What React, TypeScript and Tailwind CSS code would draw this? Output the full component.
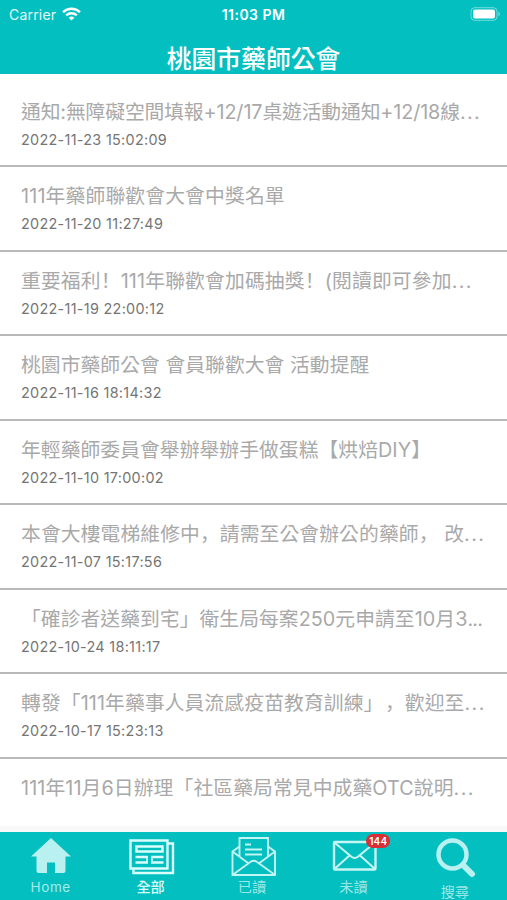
import React from 'react';
import clsx from 'clsx';

interface Notice {
  title: string;
  date?: string;
  tracking: string;
  dots?: 'wide' | 'narrow';
}

const notices: Notice[] = [
  { title: '通知:無障礙空間填報+12/17桌遊活動通知+12/18線', date: '2022-11-23 15:02:09', tracking: 'tracking-[-0.12px]', dots: 'wide' },
  { title: '111年藥師聯歡會大會中獎名單', date: '2022-11-20 11:27:49', tracking: 'tracking-[0.15px]' },
  { title: '重要福利！111年聯歡會加碼抽獎！(閱讀即可參加', date: '2022-11-19 22:00:12', tracking: 'tracking-[0.15px]', dots: 'wide' },
  { title: '桃園市藥師公會 會員聯歡大會 活動提醒', date: '2022-11-16 18:14:32', tracking: 'tracking-[0.05px]' },
  { title: '年輕藥師委員會舉辦舉辦手做蛋糕【烘焙DIY】', date: '2022-11-10 17:00:02', tracking: 'tracking-[0.05px]' },
  { title: '本會大樓電梯維修中，請需至公會辦公的藥師， 改', date: '2022-11-07 15:17:56', tracking: 'tracking-[0.1px]', dots: 'wide' },
  { title: '「確診者送藥到宅」衛生局每案250元申請至10月3', date: '2022-10-24 18:11:17', tracking: 'tracking-[0.05px]', dots: 'narrow' },
  { title: '轉發「111年藥事人員流感疫苗教育訓練」，歡迎至', date: '2022-10-17 15:23:13', tracking: 'tracking-[0.1px]', dots: 'wide' },
  { title: '111年11月6日辦理「社區藥局常見中成藥OTC說明', tracking: 'tracking-[0.1px]', dots: 'wide' },
];

// Full-width commas and exclamation marks sit on the baseline at the left of
// their cell; a comma after a closing bracket gets a little more room.
const renderTitle = (title: string) =>
  title.split(/(，|！)/).map((part, i, parts) =>
    part === '，' || part === '！' ? (
      <span
        key={i}
        lang="zh-CN"
        className={clsx(
          "font-['Noto_Sans_CJK_SC',sans-serif] leading-none",
          parts[i - 1].endsWith('」') && 'pl-[1.5px]'
        )}
      >
        {part}
      </span>
    ) : (
      <React.Fragment key={i}>{part}</React.Fragment>
    )
  );

const StatusBar: React.FC = () => (
  <div className="relative flex h-7 items-center justify-between pl-[9px] pr-1.5 text-white">
    <div className="flex items-center gap-1.5">
      <span className="text-[14px] tracking-[0.2px] opacity-90">Carrier</span>
      <svg width="19" height="14" viewBox="0 0 19 14" fill="none" stroke="white" strokeWidth="2.4">
        <path d="M1 5.2C5.8 .6 13.2 .6 18 5.2" />
        <path d="M4.2 8.3c3-2.8 7.6-2.8 10.6 0" />
        <path d="M9.5 13.6 6.6 10.7c1.6-1.5 4.2-1.5 5.8 0Z" fill="white" stroke="none" />
      </svg>
    </div>
    <span className="absolute left-1/2 -translate-x-1/2 whitespace-nowrap text-[14px] font-semibold tracking-[0.45px]">11:03 PM</span>
    <svg width="31" height="14" viewBox="0 0 31 14">
      <rect x="1" y=".7" width="26" height="12.6" rx="3.6" fill="none" stroke="white" strokeOpacity=".45" />
      <rect x="3" y="2.6" width="22" height="8.8" rx="2" fill="white" />
      <path d="M28.5 4.8c1.8.6 1.8 3.8 0 4.4Z" fill="white" fillOpacity=".5" />
    </svg>
  </div>
);

const NoticeRow: React.FC<{ notice: Notice }> = ({ notice }) => (
  <li className="h-[84.45px] shrink-0 border-b-2 border-[#b9b9b9] pl-[21px] pt-[15px]">
    <p className={clsx('h-[29px] whitespace-pre text-[19.8px] leading-[29px] text-[#a9a9a9] [text-spacing-trim:space-all]', notice.tracking)}>
      {renderTitle(notice.title)}
      {notice.dots === 'wide' && <span className="tracking-[1.4px]">...</span>}
      {notice.dots === 'narrow' && <span className="tracking-[-0.8px]">...</span>}
    </p>
    {notice.date && (
      <p className="mt-0.5 text-[14.4px] leading-[22px] tracking-[0.3px] text-[#757575]">{notice.date}</p>
    )}
  </li>
);

const HomeIcon = () => (
  <svg width="42" height="36" viewBox="0 0 42 36" fill="#b9f1f0">
    <path d="M21 0 41 18.5h-5.5V33q0 2-2 2H25V24.5h-8V35H8.5q-2 0-2-2V18.5H1Z" />
  </svg>
);

const NewsIcon = () => (
  <svg width="46" height="36" viewBox="0 0 46 36" fill="none" stroke="#d9fffd" strokeWidth="2.4">
    <path d="M1.5 1.5h37v28h-37Z" />
    <path d="M4.5 29.5V34H44V4.5h-5.5" />
    <path d="M7.5 7.5h26v5h-26Z" />
    <path d="M6.5 18H19M22 18h12.5M6.5 23.5H19M22 23.5h12.5" />
    <path d="M18 18v5.5M23 18v5.5" strokeWidth="1.5" />
  </svg>
);

const OpenMailIcon = () => (
  <svg width="46" height="40" viewBox="0 0 46 40" fill="none" stroke="#c2f5f3" strokeWidth="1.9">
    <path d="M8.5 9.5 1.5 14.5V38H44V14.5L37 9.5" />
    <path d="M8.5 19.5V1H37v18.5" />
    <path d="M1.5 14.5 17 26M44 14.5 28.5 26M1.5 38 20 24.5q2.7-1.6 5.4 0L44 38" />
    <path d="M14 7.5h6M14 12.5h17M14 17.5h17" />
  </svg>
);

const MailIcon = () => (
  <svg width="46" height="32" viewBox="0 0 46 32" fill="none" stroke="#c6f7f5" strokeWidth="2.4">
    <rect x="2" y="2" width="41.5" height="27.5" rx="1" />
    <path d="M3 3 19.5 16.8q3.2 2.5 6.4 0L42.5 3M3 28.5 17.5 15.5M42.5 28.5 28 15.5" strokeWidth="2" />
  </svg>
);

const SearchIcon = () => (
  <svg width="40" height="40" viewBox="0 0 40 40" fill="none" stroke="#b9f1f0">
    <circle cx="16.5" cy="16.5" r="14" strokeWidth="4.5" />
    <path d="m27 27 9 9" strokeWidth="6" strokeLinecap="round" />
  </svg>
);

interface TabProps {
  label: string;
  iconClass: string;
  labelClass: string;
  badge?: string;
  children: React.ReactNode;
}

const Tab: React.FC<TabProps> = ({ label, iconClass, labelClass, badge, children }) => (
  <button className="relative flex flex-1 flex-col items-center">
    <span className={clsx('flex h-[46px] items-start justify-center', iconClass)}>{children}</span>
    <span className={clsx('whitespace-nowrap leading-[18px]', labelClass)}>{label}</span>
    {badge && (
      <span className="absolute left-[62px] top-[2px] flex h-[14px] w-6 items-center justify-center rounded-full bg-[#d92f36] text-[10px] font-semibold tracking-[0.2px] text-white">
        {badge}
      </span>
    )}
  </button>
);

const App: React.FC = () => {
  return (
    <div className="flex h-[900px] w-[507px] flex-col overflow-hidden bg-white font-['Inter','Noto_Sans_CJK_TC',sans-serif]" lang="zh-TW">
      <header className="h-[74px] shrink-0 bg-[#03bfc0]">
        <StatusBar />
        <h1 className="mt-[13px] text-center text-[24.8px] font-medium leading-[36px] text-white">桃園市藥師公會</h1>
      </header>

      <ul className="flex min-h-0 flex-1 flex-col overflow-hidden pt-[9px]">
        {notices.map((notice) => (
          <NoticeRow key={notice.title} notice={notice} />
        ))}
      </ul>

      <nav className="flex h-[74px] shrink-0 border-t-[6px] border-[#f9f9f9] bg-[#03bfc0]">
        <Tab label="Home" iconClass="pt-[6px]" labelClass="text-[13.5px] tracking-[0.6px] text-[#a5ecea]">
          <HomeIcon />
        </Tab>
        <Tab label="全部" iconClass="pt-[7px]" labelClass="pr-[3px] text-[14.2px] font-medium text-[#d9fffd]">
          <NewsIcon />
        </Tab>
        <Tab label="已讀" iconClass="pt-[5px]" labelClass="pr-[3px] text-[14.2px] text-[#9ae8e6]">
          <OpenMailIcon />
        </Tab>
        <Tab label="未讀" iconClass="pt-[8px]" labelClass="pr-[3px] text-[14.2px] text-[#9ae8e6]" badge="144">
          <MailIcon />
        </Tab>
        <Tab label="搜尋" iconClass="pt-[6px]" labelClass="mt-[5px] pr-[3px] text-[14.2px] text-[#9ae8e6]">
          <SearchIcon />
        </Tab>
      </nav>
    </div>
  );
};

export default App;
